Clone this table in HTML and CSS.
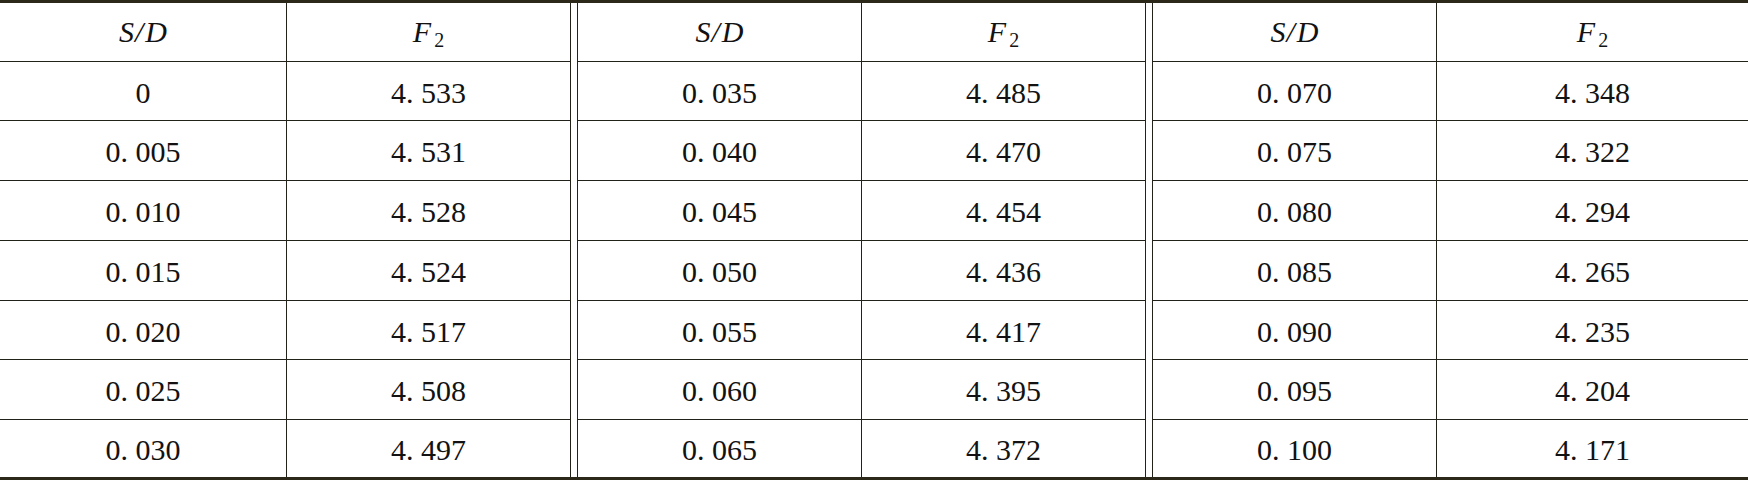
FILE: index.html
```html
<!DOCTYPE html>
<html lang="zh">
<head>
    <meta charset="UTF-8">
    <title>S/D - F2</title>
    <link rel="stylesheet" href="styles.css">
</head>
<body>
    <div class="sheet">
        <div class="group g1">
            <div class="cell hd"><i>S<span class="sl">/</span>D</i></div>
            <div class="cell hd"><i>F</i><sub>2</sub></div>
            <div class="cell">0</div><div class="cell">4. 533</div>
            <div class="cell">0. 005</div><div class="cell">4. 531</div>
            <div class="cell">0. 010</div><div class="cell">4. 528</div>
            <div class="cell">0. 015</div><div class="cell">4. 524</div>
            <div class="cell">0. 020</div><div class="cell">4. 517</div>
            <div class="cell">0. 025</div><div class="cell">4. 508</div>
            <div class="cell">0. 030</div><div class="cell">4. 497</div>
        </div>
        <div class="group g2">
            <div class="cell hd"><i>S<span class="sl">/</span>D</i></div>
            <div class="cell hd"><i>F</i><sub>2</sub></div>
            <div class="cell">0. 035</div><div class="cell">4. 485</div>
            <div class="cell">0. 040</div><div class="cell">4. 470</div>
            <div class="cell">0. 045</div><div class="cell">4. 454</div>
            <div class="cell">0. 050</div><div class="cell">4. 436</div>
            <div class="cell">0. 055</div><div class="cell">4. 417</div>
            <div class="cell">0. 060</div><div class="cell">4. 395</div>
            <div class="cell">0. 065</div><div class="cell">4. 372</div>
        </div>
        <div class="group g3">
            <div class="cell hd"><i>S<span class="sl">/</span>D</i></div>
            <div class="cell hd"><i>F</i><sub>2</sub></div>
            <div class="cell">0. 070</div><div class="cell">4. 348</div>
            <div class="cell">0. 075</div><div class="cell">4. 322</div>
            <div class="cell">0. 080</div><div class="cell">4. 294</div>
            <div class="cell">0. 085</div><div class="cell">4. 265</div>
            <div class="cell">0. 090</div><div class="cell">4. 235</div>
            <div class="cell">0. 095</div><div class="cell">4. 204</div>
            <div class="cell">0. 100</div><div class="cell">4. 171</div>
        </div>
    </div>
</body>
</html>
```

FILE: styles.css
```css
body {
    margin: 0;
    background-color: #ffffff;
    font-family: "Liberation Serif", "Times New Roman", serif;
    color: #121212;
}

.sheet {
    display: flex;
    gap: 6px;
    width: 1748px;
    border-top: 3px solid #2b2719;
    border-bottom: 3px solid #2b2719;
}

.group {
    display: grid;
    grid-template-rows: 59px 59px 60px 60px 60px 59px 60px 57px;
    box-sizing: border-box;
}

.g1 {
    width: 571px;
    grid-template-columns: 287px 1fr;
    border-right: 1px solid #22221a;
}

.g2 {
    width: 569px;
    grid-template-columns: 284px 1fr;
    border-left: 1px solid #22221a;
    border-right: 1px solid #22221a;
}

.g3 {
    width: 596px;
    grid-template-columns: 284px 1fr;
    border-left: 1px solid #22221a;
}

.cell {
    display: flex;
    align-items: center;
    justify-content: center;
    box-sizing: border-box;
    padding-top: 3px;
    font-size: 30px;
    border-bottom: 1px solid #22221a;
}

.cell:nth-child(2n+1) {
    border-right: 1px solid #22221a;
}

.cell:nth-last-child(-n+2) {
    border-bottom: none;
}

.hd {
    padding-top: 0;
}

.hd .sl {
    margin: 0 2px 0 1px;
}

.hd sub {
    font-size: 20px;
    position: relative;
    top: 8px;
    vertical-align: baseline;
    margin-left: 3px;
}
```
